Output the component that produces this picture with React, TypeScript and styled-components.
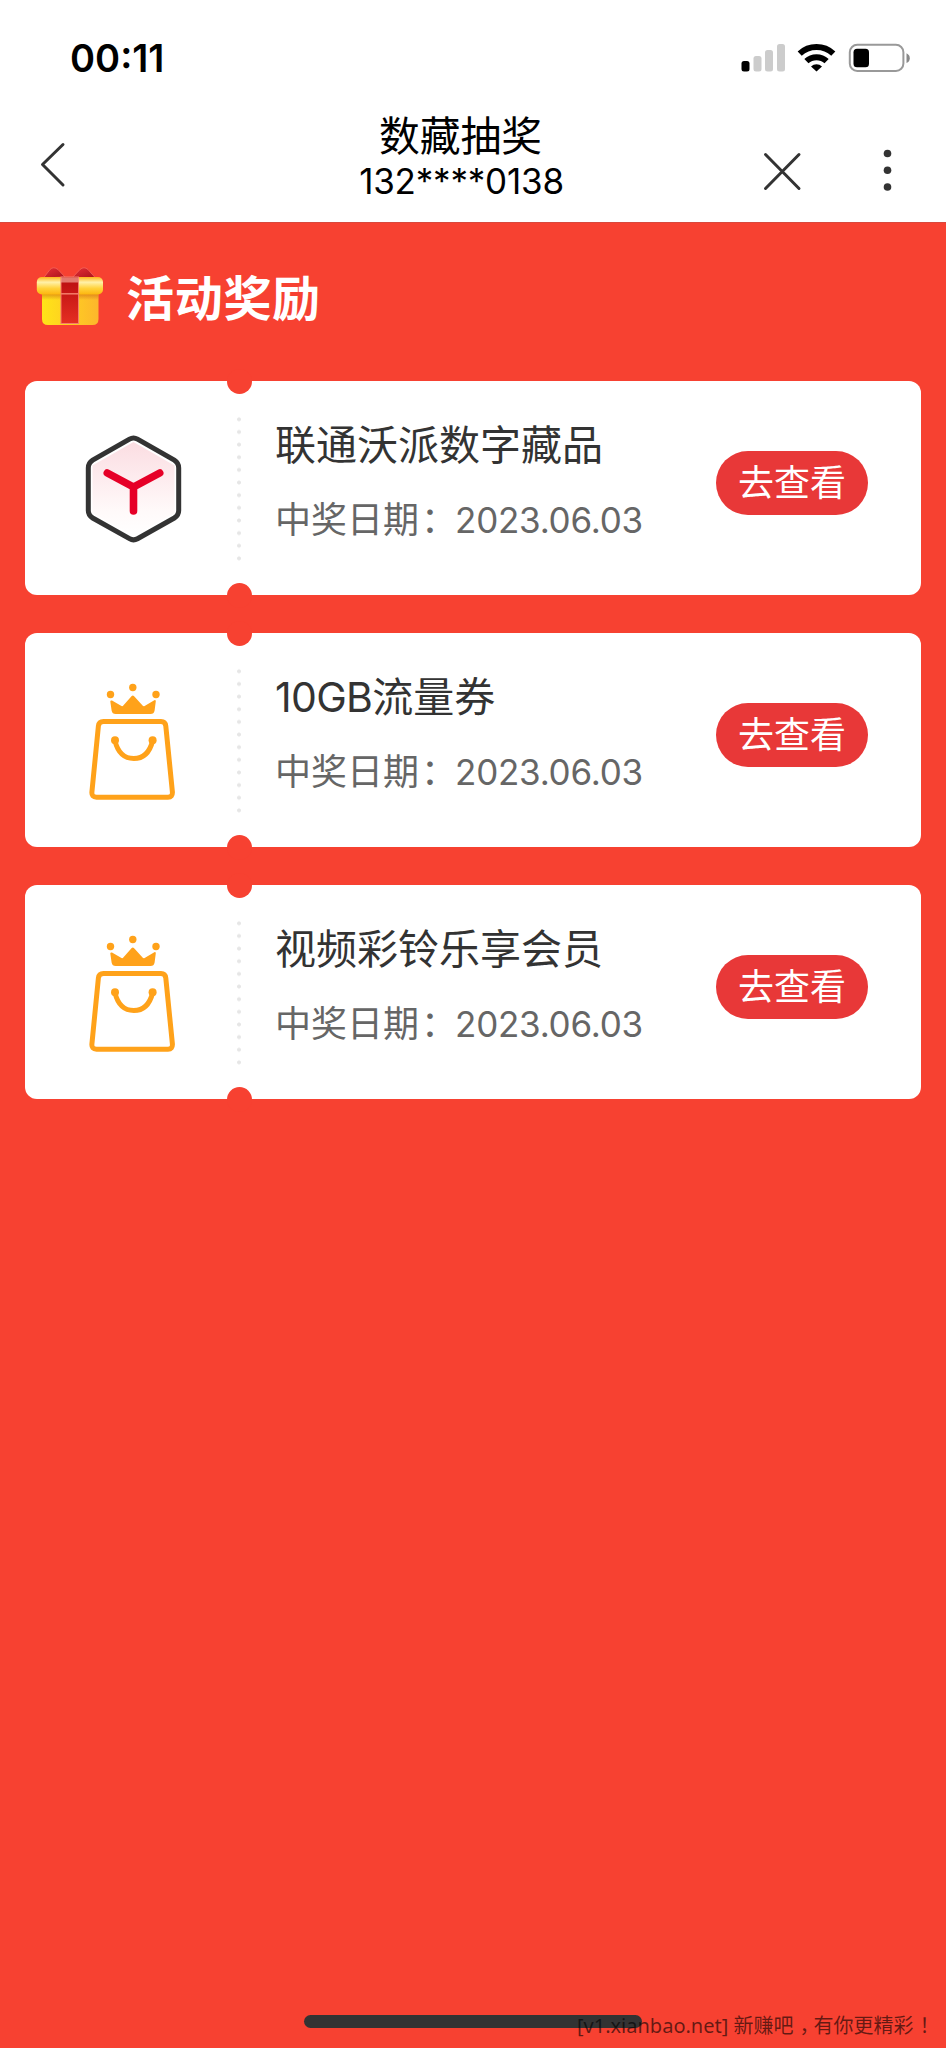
import React from "react";
import styled, { createGlobalStyle } from "styled-components";

const RED = "#f74131";

const GlobalStyle = createGlobalStyle`
  * { box-sizing: border-box; }
  body {
    margin: 0;
    background: ${RED};
    font-family: Inter, "Noto Sans CJK SC", sans-serif;
  }
`;

const Screen = styled.div`
  position: relative;
  width: 946px;
  height: 2048px;
  overflow: hidden;
  background: ${RED};
`;

const Header = styled.header`
  height: 223px;
  background: #fff;
  border-bottom: 1px solid #d9483c;
`;

const StatusBar = styled.div`
  display: flex;
  align-items: center;
  height: 116px;
  padding-left: 70px;
`;

const Clock = styled.span`
  flex: 1;
  font-size: 38px;
  line-height: 46px;
  font-weight: 600;
  color: #000;
`;

const NavBar = styled.div`
  display: grid;
  grid-template-columns: 280px 363px 303px;
  height: 105px;
`;

const NavTitle = styled.h1`
  margin: -2px 0 0 -2px;
  text-align: center;
  font-size: 40.8px;
  line-height: 44px;
  font-weight: 400;
  color: #000;
  white-space: nowrap;
`;

const NavPhone = styled.div`
  text-align: center;
  font-size: 35px;
  line-height: 42px;
  margin-top: 2px;
  letter-spacing: -0.2px;
  color: #000;
`;

const Section = styled.section`
  padding: 0 25px;
`;

const SectionHead = styled.div`
  display: flex;
  align-items: center;
  gap: 20px;
  height: 158px;
  padding: 0 0 13px 9px;
`;

const SectionTitle = styled.h2`
  margin: 6px 0 0;
  font-size: 48px;
  line-height: 60px;
  font-weight: 600;
  letter-spacing: 0.7px;
  color: #fff;
`;

const PrizeList = styled.div`
  display: flex;
  flex-direction: column;
  gap: 38px;
`;

const Card = styled.article`
  position: relative;
  display: flex;
  height: 214px;
  border-radius: 12px;
  background: #fff;
`;

const Notch = styled.i<{ $edge: "top" | "bottom" }>`
  position: absolute;
  left: 202px;
  ${(p) => p.$edge}: -12.5px;
  width: 25px;
  height: 25px;
  border-radius: 50%;
  background: ${RED};
`;

const Art = styled.div`
  width: 212px;
  display: flex;
  align-items: center;
  justify-content: center;
  padding-left: 6px;
`;

const Perforation = styled.div`
  width: 4px;
  height: 152px;
  margin: 32px 1px 0 0;
  background: radial-gradient(circle, #e6e6e6 1.5px, transparent 2.4px) 0 0 / 4px 12.65px repeat-y;
`;

const Info = styled.div`
  flex: 1;
  padding: 36px 0 0 33px;
  white-space: nowrap;
`;

const PrizeName = styled.h3`
  margin: 0;
  font-size: 41px;
  line-height: 56px;
  font-weight: 400;
  color: #333;
`;

const Amount = styled.span`
  letter-spacing: -0.7px;
`;

const PrizeDate = styled.p`
  margin: 22px 0 0;
  font-size: 36px;
  line-height: 50px;
  color: #666;
`;

const Mark = styled.span<{ $shift: number }>`
  padding-left: ${(p) => p.$shift}px;
  letter-spacing: ${(p) => -p.$shift}px;
`;

const DateValue = styled.span`
  font-size: 35px;
  letter-spacing: -0.25px;
`;

const ViewButton = styled.button`
  width: 152px;
  height: 64px;
  margin: 70px 53px 0 0;
  padding: 0 0 1px;
  border: 0;
  border-radius: 32px;
  background: #e83838;
  color: #fff;
  font: 400 36px/60px Inter, "Noto Sans CJK SC", sans-serif;
`;

const HomeIndicator = styled.div`
  position: absolute;
  left: 304px;
  top: 2015px;
  width: 338px;
  height: 13px;
  border-radius: 7px;
  background: #333;
`;

const Watermark = styled.div`
  position: absolute;
  left: 577px;
  top: 2012px;
  font: 400 20px/28px "Noto Sans", "Noto Sans CJK SC", sans-serif;
  color: rgba(0, 0, 0, 0.6);
  white-space: nowrap;
`;

const StatusIcons = () => (
  <svg width="210" height="60" viewBox="736 28 210 60">
    <rect x="741.5" y="61" width="8" height="10.5" rx="2.5" fill="#000" />
    <rect x="753.5" y="56" width="8" height="15.5" rx="2.5" fill="#ccc" />
    <rect x="765" y="50" width="8" height="21.5" rx="2.5" fill="#ccc" />
    <rect x="777" y="44" width="8" height="27.5" rx="2.5" fill="#ccc" />
    <g fill="none" stroke="#000" strokeWidth="6">
      <path d="M799.7 53.6a24.6 24.6 0 0 1 33.6 0" />
      <path d="M806.4 61.2a14.6 14.6 0 0 1 20.2 0" />
    </g>
    <path d="M811 66.4a8.3 8.3 0 0 1 11 0L816.5 71.6Z" fill="#000" />
    <rect x="849.8" y="44.8" width="53.6" height="26.2" rx="7.5" fill="none" stroke="#999" strokeWidth="2" />
    <rect x="853.5" y="48.7" width="15.5" height="18.5" rx="3.5" fill="#000" />
    <path d="M906.5 53.3q3.3 1.6 3.3 4.9t-3.3 4.9Z" fill="#888" />
  </svg>
);

const BackIcon = () => (
  <svg width="280" height="105" viewBox="0 116 280 105">
    <path d="M63 144.5 42.5 164.5 63 185" fill="none" stroke="#333" strokeWidth="3" strokeLinecap="round" strokeLinejoin="round" />
  </svg>
);

const NavActions = () => (
  <svg width="303" height="105" viewBox="643 116 303 105">
    <path d="M765.5 154.5 799 188.5M799 154.5 765.5 188.5" stroke="#333" strokeWidth="3" strokeLinecap="round" />
    <g fill="#333">
      <circle cx="887.5" cy="153.5" r="3.8" />
      <circle cx="887.5" cy="170.3" r="3.8" />
      <circle cx="887.5" cy="187" r="3.8" />
    </g>
  </svg>
);

const GiftIcon = () => (
  <svg width="72" height="64" viewBox="34 263 72 64">
    <defs>
      <linearGradient id="giftLid" x1="0" y1="0" x2="0" y2="1">
        <stop offset="0" stopColor="#ffb51b" />
        <stop offset=".3" stopColor="#fff1a8" />
        <stop offset=".65" stopColor="#ffd23a" />
        <stop offset="1" stopColor="#fdb50e" />
      </linearGradient>
      <linearGradient id="giftBox" x1="0" y1="0" x2="1" y2="0">
        <stop offset="0" stopColor="#ffe418" />
        <stop offset="1" stopColor="#fdb62c" />
      </linearGradient>
      <linearGradient id="giftShade" x1="0" y1="0" x2="0" y2="1">
        <stop offset="0" stopColor="#c65a10" stopOpacity=".6" />
        <stop offset="1" stopColor="#c65a10" stopOpacity="0" />
      </linearGradient>
      <linearGradient id="giftRibbon" x1="0" y1="0" x2="0" y2="1">
        <stop offset="0" stopColor="#b90c10" />
        <stop offset="1" stopColor="#e52f22" />
      </linearGradient>
      <linearGradient id="giftBow" x1="0" y1="0" x2="1" y2="1">
        <stop offset="0" stopColor="#e8303a" />
        <stop offset="1" stopColor="#a91218" />
      </linearGradient>
    </defs>
    <path d="M43.5 277 50 268.5q3.5-3.5 8 0L65 276Z" fill="url(#giftBow)" stroke="#f2645a" strokeWidth=".8" />
    <path d="M72 277 80 268.5q4-3.5 8 0L95.5 277Z" fill="url(#giftBow)" stroke="#f2645a" strokeWidth=".8" />
    <path d="M42 290h56.5v28q0 6-6 6H48q-6 0-6-6Z" fill="url(#giftBox)" />
    <rect x="42" y="292" width="56.5" height="7" fill="url(#giftShade)" />
    <rect x="36.8" y="276" width="66.2" height="17.5" rx="5" fill="url(#giftLid)" />
    <rect x="61" y="276" width="17.5" height="46.5" fill="url(#giftRibbon)" stroke="#f57d6a" strokeWidth="1" />
    <path d="M61 276.5h17.5v5H61Z" fill="#f4a596" opacity=".7" />
    <path d="M61 292.8h17.5" stroke="#f57d6a" strokeWidth="1.5" />
  </svg>
);

const CubeIcon = () => (
  <svg width="100" height="120" viewBox="84 428 100 120">
    <defs>
      <linearGradient id="cubeFill" x1="0" y1="0" x2="0" y2="1">
        <stop offset="0" stopColor="#fbdde2" />
        <stop offset=".75" stopColor="#fffafa" />
        <stop offset="1" stopColor="#fff" />
      </linearGradient>
    </defs>
    <path d="M133.5 442 174.5 465.5V513L133.5 536 92.5 513V465.5Z" fill="url(#cubeFill)" />
    <path
      d="M137.5 439.2 174.3 460.2Q178.7 463 178.7 468V510.5Q178.7 515.3 174.3 518L137.5 538.7Q133.5 541 129.5 538.7L92.7 518Q88.3 515.3 88.3 510.5V468Q88.3 463 92.7 460.2L129.5 439.2Q133.5 436.8 137.5 439.2Z"
      fill="none"
      stroke="#333"
      strokeWidth="5"
    />
    <path d="M107.3 473 133.5 487 159.7 473M133.5 487V511" fill="none" stroke="#e60027" strokeWidth="7.6" strokeLinecap="round" />
  </svg>
);

const BagIcon = () => (
  <svg width="100" height="124" viewBox="84 678 100 124">
    <g fill="#ffa21a">
      <circle cx="110.5" cy="694.5" r="3.7" />
      <circle cx="132.8" cy="687.5" r="3.7" />
      <circle cx="156" cy="694.5" r="3.7" />
      <path d="M112 700.5 121.5 706Q122.5 706.5 123.3 705.5L131.7 696Q132.8 694.9 133.9 696L142.8 705.8Q143.6 706.6 144.6 706L154.3 700.2Q155.8 699.7 155.8 701.3L154.6 710.5Q154 714 150.5 714H115.7Q112.2 714 111.6 710.5L110.3 701.5Q110.3 700 112 700.5Z" />
      <circle cx="115" cy="740.3" r="4" />
      <circle cx="152.6" cy="740.3" r="4" />
    </g>
    <g fill="none" stroke="#ffa21a">
      <path d="M103.5 721.5H161Q165.3 721.5 165.8 726L172.4 792Q172.7 797.2 168 797.2H96.5Q91.5 797.2 91.9 792L98.4 726Q98.9 721.5 103.5 721.5Z" strokeWidth="5" />
      <path d="M115 741C118 753 124 758.5 133.8 758.5S149.5 753 152.6 741" strokeWidth="5" />
    </g>
  </svg>
);

const prizes = [
  { id: "cube", name: "联通沃派数字藏品", date: "2023.06.03", Icon: CubeIcon },
  { id: "data", amount: "10GB", name: "流量券", date: "2023.06.03", Icon: BagIcon },
  { id: "video", name: "视频彩铃乐享会员", date: "2023.06.03", Icon: BagIcon },
];

export default function App() {
  return (
    <Screen>
      <GlobalStyle />
      <Header>
        <StatusBar>
          <Clock>00:11</Clock>
          <StatusIcons />
        </StatusBar>
        <NavBar>
          <BackIcon />
          <div>
            <NavTitle>数藏抽奖</NavTitle>
            <NavPhone>132****0138</NavPhone>
          </div>
          <NavActions />
        </NavBar>
      </Header>
      <Section>
        <SectionHead>
          <GiftIcon />
          <SectionTitle>活动奖励</SectionTitle>
        </SectionHead>
        <PrizeList>
          {prizes.map(({ id, amount, name, date, Icon }) => (
            <Card key={id}>
              <Notch $edge="top" />
              <Notch $edge="bottom" />
              <Art>
                <Icon />
              </Art>
              <Perforation />
              <Info>
                <PrizeName>
                  {amount && <Amount>{amount}</Amount>}
                  {name}
                </PrizeName>
                <PrizeDate>
                  中奖日期<Mark $shift={2}>：</Mark>
                  <DateValue>{date}</DateValue>
                </PrizeDate>
              </Info>
              <ViewButton>去查看</ViewButton>
            </Card>
          ))}
        </PrizeList>
      </Section>
      <HomeIndicator />
      <Watermark>
        [v1.xianbao.net] 新赚吧<Mark $shift={6}>，</Mark>有你更精彩<Mark $shift={6}>！</Mark>
      </Watermark>
    </Screen>
  );
}
